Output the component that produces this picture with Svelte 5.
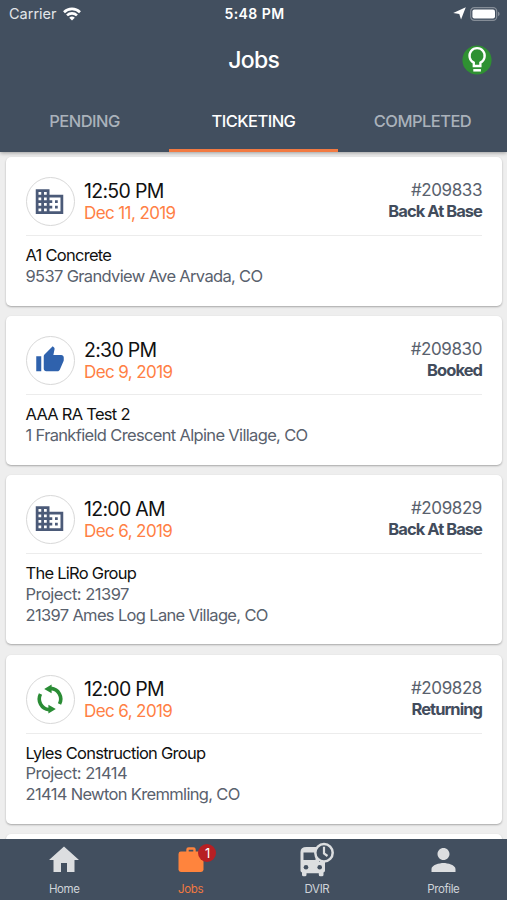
<script>
    const tabs = ['PENDING', 'TICKETING', 'COMPLETED']
    let activeTab = 'TICKETING'

    const jobs = [
        { id: '209833', time: '12:50 PM', date: 'Dec 11, 2019', status: 'Back At Base', icon: 'building', customer: 'A1 Concrete', address: '9537 Grandview Ave Arvada, CO' },
        { id: '209830', time: '2:30 PM', date: 'Dec 9, 2019', status: 'Booked', icon: 'thumb', customer: 'AAA RA Test 2', address: '1 Frankfield Crescent Alpine Village, CO' },
        { id: '209829', time: '12:00 AM', date: 'Dec 6, 2019', status: 'Back At Base', icon: 'building', customer: 'The LiRo Group', project: '21397', address: '21397 Ames Log Lane Village, CO' },
        { id: '209828', time: '12:00 PM', date: 'Dec 6, 2019', status: 'Returning', icon: 'sync', customer: 'Lyles Construction Group', project: '21414', address: '21414 Newton Kremmling, CO' }
    ]
</script>

<div class="screen">
    <header>
        <div class="statusBar">
            <div class="carrier">
                <span>Carrier</span>
                <svg width="18" height="14" viewBox="0 0 18 14" fill="none" stroke="#fff" stroke-width="2.6">
                    <path d="M1 5.2a11.4 11.4 0 0 1 16 0" />
                    <path d="M4 8.4a7.2 7.2 0 0 1 10 0" />
                    <path d="M9 13.6 6.2 10.8a4 4 0 0 1 5.6 0z" fill="#fff" stroke="none" />
                </svg>
            </div>
            <div class="clock">5:48 PM</div>
            <div class="battery">
                <svg width="13" height="13" viewBox="0 0 12 12"><path d="M11.8.2 7.4 11.6 5.8 6.5.2 5.6z" fill="#fff" /></svg>
                <svg width="30" height="14" viewBox="0 0 30 14">
                    <rect x=".7" y=".7" width="26" height="12.6" rx="3.6" fill="none" stroke="#858d97" stroke-width="1.2" />
                    <rect x="2.4" y="2.4" width="22.6" height="9.2" rx="2" fill="#fff" />
                    <path d="M28 4.8v4.4c1-.3 1.6-1.2 1.6-2.2S29 5.1 28 4.8z" fill="#858d97" />
                </svg>
            </div>
        </div>
        <div class="titleBar">
            <h1>Jobs</h1>
            <button class="hint" aria-label="Tips">
                <svg width="30" height="30" viewBox="0 0 30 30">
                    <circle cx="15" cy="15" r="14.6" fill="#2f9132" />
                    <path d="M11.8 21v-3.4a7.6 7.6 0 1 1 6.6 0V21z" fill="none" stroke="#fff" stroke-width="2.3" />
                    <path d="M11.3 25.3h7.6" stroke="#fff" stroke-width="2.5" />
                </svg>
            </button>
        </div>
        <nav class="tabs">
            {#each tabs as tab}
                <button class="tab" class:active={tab === activeTab} on:click={() => activeTab = tab}>{tab}</button>
            {/each}
        </nav>
    </header>

    <main>
        {#each jobs as job}
            <article class="card">
                <div class="top">
                    <div class="circle">
                        {#if job.icon === 'building'}
                            <svg width="33" height="33" viewBox="0 0 24 24" fill="#4b5a78"><path d="M12 7V3H2v18h20V7H12zM6 19H4v-2h2v2zm0-4H4v-2h2v2zm0-4H4V9h2v2zm0-4H4V5h2v2zm4 12H8v-2h2v2zm0-4H8v-2h2v2zm0-4H8V9h2v2zm0-4H8V5h2v2zm10 12h-8v-2h2v-2h-2v-2h2v-2h-2V9h8v10zm-2-8h-2v2h2v-2zm0 4h-2v2h2v-2z" /></svg>
                        {:else if job.icon === 'thumb'}
                            <svg width="30" height="30" viewBox="0 0 24 24" fill="#2f62ad"><path d="M1 21h4V9H1v12zm22-11c0-1.1-.9-2-2-2h-6.31l.95-4.57.03-.32c0-.41-.17-.79-.44-1.06L14.17 1 7.59 7.59C7.22 7.95 7 8.45 7 9v10c0 1.1.9 2 2 2h9c.83 0 1.54-.5 1.84-1.22l3.02-7.05c.09-.23.14-.47.14-.73v-2z" /></svg>
                        {:else}
                            <svg width="30" height="30" viewBox="0 0 30 30" fill="none" stroke="#2a8c35" stroke-width="3.6">
                                <path d="M16 4.4a10.7 10.7 0 0 1 8.5 15.6M14 25.6A10.7 10.7 0 0 1 5.5 10" />
                                <path d="M16.6.6v8.6L9.2 4.9zM13.4 20.8v8.6l7.4-4.3z" fill="#2a8c35" stroke="none" />
                            </svg>
                        {/if}
                    </div>
                    <div class="when">
                        <div class="time">{job.time}</div>
                        <div class="date">{job.date}</div>
                    </div>
                    <div class="info">
                        <div class="number">#{job.id}</div>
                        <div class="state">{job.status}</div>
                    </div>
                </div>
                <div class="details">
                    <div class="customer">{job.customer}</div>
                    {#if job.project}
                        <div class="project">Project: {job.project}</div>
                    {/if}
                    <div class="address">{job.address}</div>
                </div>
            </article>
        {/each}
        <article class="card"></article>
    </main>

    <footer>
        <div class="navItem">
            <svg width="36" height="36" viewBox="0 0 24 24" fill="#dcdee0"><path d="M10 20v-6h4v6h5v-8h3L12 3 2 12h3v8z" /></svg>
            <span>Home</span>
        </div>
        <div class="navItem current">
            <svg width="36" height="36" viewBox="0 0 36 36">
                <path d="M14.5 10.5V7.6q0-1.1 1.1-1.1h4.8q1.1 0 1.1 1.1v2.9" fill="none" stroke="#ff843d" stroke-width="2.4" />
                <rect x="5.5" y="9.6" width="25" height="20.4" rx="2.4" fill="#ff843d" />
            </svg>
            <div class="badge">1</div>
            <span>Jobs</span>
        </div>
        <div class="navItem">
            <svg width="36" height="36" viewBox="0 0 36 36">
                <path d="M1.5 10q0-5 6-5h12.500v15h6v8.500q0 1.500-1.500 2v2.300q0 1.500-1.500 1.500h-1.700q-1.500 0-1.500-1.500V31.300H7.500v1.500q0 1.500-1.500 1.500H4.500q-1.500 0-1.500-1.500v-2.300q-1.500-.5-1.500-2z" fill="#dcdee0" />
                <path d="M4.500 10.500h12v7.500h-12z" fill="#424f5f" />
                <circle cx="7" cy="25.200" r="2.300" fill="#424f5f" />
                <circle cx="20.700" cy="25.200" r="2.300" fill="#424f5f" />
                <circle cx="25" cy="10.800" r="8.700" fill="#424f5f" stroke="#dcdee0" stroke-width="2.500" />
                <path d="M25 4.800v6.700l3.500 2.500" fill="none" stroke="#dcdee0" stroke-width="2.200" />
            </svg>
            <span>DVIR</span>
        </div>
        <div class="navItem">
            <svg width="37" height="37" viewBox="0 0 24 24" fill="#dcdee0"><path d="M12 12c2.21 0 4-1.79 4-4s-1.79-4-4-4-4 1.79-4 4 1.79 4 4 4zm0 2c-2.67 0-8 1.34-8 4v2h16v-2c0-2.66-5.33-4-8-4z" /></svg>
            <span>Profile</span>
        </div>
    </footer>
</div>

<style>
    :global(body) {
        margin: 0;
        background: #eee;
    }
    .screen {
        display: flex;
        flex-direction: column;
        height: 900px;
        overflow: hidden;
        font-family: Inter, "Liberation Sans", sans-serif;
        background: #eee;
    }
    button {
        all: unset;
        cursor: pointer;
    }

    header {
        flex: none;
        height: 152px;
        color: #fff;
        background: #424f5f;
        box-shadow: 0 1px 4px rgba(0, 0, 0, 0.35);
        z-index: 1;
    }
    .statusBar {
        display: grid;
        grid-template-columns: 1fr auto 1fr;
        align-items: center;
        height: 27px;
        padding: 0 7px 0 9px;
        font-size: 14.5px;
    }
    .carrier {
        display: flex;
        align-items: center;
        gap: 6px;
        color: #e3e6e9;
    }
    .clock {
        font-weight: 600;
        font-size: 14px;
        letter-spacing: 0.45px;
    }
    .battery {
        display: flex;
        justify-content: flex-end;
        align-items: center;
        gap: 4px;
    }
    .titleBar {
        display: grid;
        grid-template-columns: 1fr auto 1fr;
        align-items: center;
        height: 66px;
        padding: 0 15.5px 0 16px;
    }
    h1 {
        grid-column: 2;
        margin: 0;
        font-size: 23px;
        font-weight: 500;
        letter-spacing: -0.7px;
    }
    .hint {
        justify-self: end;
        height: 30px;
    }
    .tabs {
        display: grid;
        grid-template-columns: repeat(3, 1fr);
        height: 59px;
    }
    .tab {
        box-sizing: border-box;
        height: 59px;
        border-bottom: 3px solid transparent;
        text-align: center;
        line-height: 57px;
        font-size: 16.5px;
        font-weight: 500;
        letter-spacing: -0.55px;
        color: #aab2bb;
    }
    .tab.active {
        color: #fff;
        border-color: #f27a42;
    }

    main {
        flex: 1;
        min-height: 0;
        overflow: hidden;
        padding: 5.2px 5px 0 6px;
    }
    .card {
        box-sizing: border-box;
        min-height: 60px;
        margin-bottom: 10.3px;
        padding: 20px 20px 19px 19.5px;
        border-radius: 5px;
        background: #fff;
        box-shadow: 0 1px 2px rgba(0, 0, 0, 0.3);
    }
    .top {
        display: flex;
        height: 58px;
        border-bottom: 1px solid #ececec;
    }
    .circle {
        box-sizing: border-box;
        display: flex;
        align-items: center;
        justify-content: center;
        width: 49px;
        height: 49px;
        border: 1.5px solid #d8d8d8;
        border-radius: 50%;
    }
    .circle svg {
        flex: none;
        margin: 0 1px 1px 0;
    }
    .when {
        flex: 1;
        padding: 2px 0 0 9.5px;
    }
    .time {
        font-size: 19.5px;
        line-height: 24px;
        letter-spacing: -0.7px;
        color: #111;
    }
    .date {
        font-size: 17px;
        line-height: 20px;
        letter-spacing: -0.6px;
        color: #ff7f45;
    }
    .info {
        padding-top: 3px;
        text-align: right;
        font-size: 16.5px;
        line-height: 21px;
        color: #59616d;
    }
    .number {
        font-size: 17px;
        letter-spacing: -0.4px;
    }
    .state {
        font-weight: 700;
        letter-spacing: -0.95px;
        color: #424c5c;
    }
    .details {
        padding-top: 9px;
        font-size: 16.5px;
        line-height: 20.8px;
        letter-spacing: -0.5px;
        color: #59616d;
    }
    .customer {
        letter-spacing: -0.73px;
        color: #111;
    }
    .address {
        letter-spacing: -0.66px;
    }

    footer {
        flex: none;
        display: grid;
        grid-template-columns: repeat(4, 126.4px);
        padding-left: 1px;
        height: 61px;
        background: #424f5f;
        z-index: 1;
    }
    .navItem {
        position: relative;
        display: flex;
        flex-direction: column;
        align-items: center;
        padding-top: 3px;
        font-size: 11.5px;
        letter-spacing: -0.4px;
        color: #cfd4d9;
    }
    .navItem svg {
        flex: none;
        height: 36px;
    }
    .navItem span {
        line-height: 22px;
    }
    .current {
        color: #f0793f;
    }
    .badge {
        position: absolute;
        top: 5px;
        left: 71px;
        width: 18px;
        height: 18px;
        border-radius: 50%;
        background: #b71f23;
        color: #fff;
        font-size: 13px;
        line-height: 18px;
        text-align: center;
    }
</style>
